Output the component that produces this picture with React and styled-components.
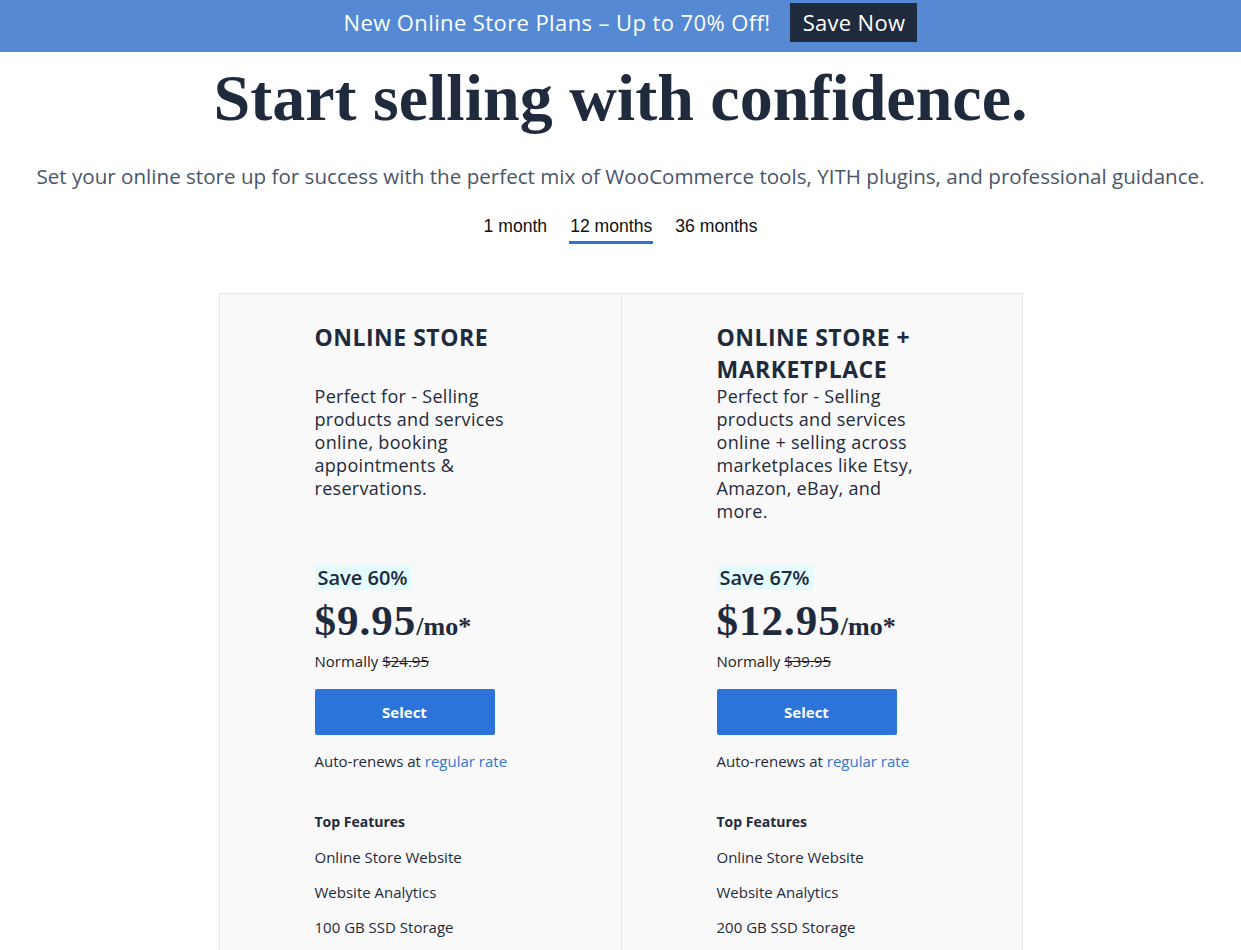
import React from 'react';
import styled, { createGlobalStyle } from 'styled-components';

const plans = [
  {
    title: 'ONLINE STORE',
    description: 'Perfect for - Selling products and services online, booking appointments & reservations.',
    save: 'Save 60%',
    price: '$9.95',
    normal: '$24.95',
    features: ['Online Store Website', 'Website Analytics', '100 GB SSD Storage'],
  },
  {
    title: 'ONLINE STORE + MARKETPLACE',
    description:
      'Perfect for - Selling products and services online + selling across marketplaces like Etsy, Amazon, eBay, and more.',
    save: 'Save 67%',
    price: '$12.95',
    normal: '$39.95',
    features: ['Online Store Website', 'Website Analytics', '200 GB SSD Storage'],
  },
];

const terms = ['1 month', '12 months', '36 months'];

function PlanCard({ plan }) {
  return (
    <Card>
      <CardInner>
        <PlanTitle>{plan.title}</PlanTitle>
        <PlanDescription>{plan.description}</PlanDescription>
        <SaveBadge>{plan.save}</SaveBadge>
        <Price>
          {plan.price}
          <PerMonth>/mo*</PerMonth>
        </Price>
        <Normally>
          Normally <s>{plan.normal}</s>
        </Normally>
        <SelectButton>Select</SelectButton>
        <Renews>
          Auto-renews at <RateLink href="#">regular rate</RateLink>
        </Renews>
        <FeaturesHeading>Top Features</FeaturesHeading>
        <FeatureList>
          {plan.features.map((f) => (
            <Feature key={f}>{f}</Feature>
          ))}
        </FeatureList>
      </CardInner>
    </Card>
  );
}

export default function App() {
  return (
    <>
      <GlobalStyle />
      <Banner>
        <BannerText>New Online Store Plans – Up to 70% Off!</BannerText>
        <SaveNow>Save Now</SaveNow>
      </Banner>
      <Main>
        <Headline>Start selling with confidence.</Headline>
        <Subtitle>
          Set your online store up for success with the perfect mix of WooCommerce tools, YITH plugins, and
          professional guidance.
        </Subtitle>
        <Tabs>
          {terms.map((t) => (
            <Tab key={t} active={t === '12 months'}>
              {t}
            </Tab>
          ))}
        </Tabs>
        <Cards>
          {plans.map((p) => (
            <PlanCard key={p.title} plan={p} />
          ))}
        </Cards>
      </Main>
    </>
  );
}

const GlobalStyle = createGlobalStyle`
  body {
    margin: 0;
    background: #fff;
    font-family: "Open Sans", Lato, sans-serif;
    color: #1f2a3c;
  }
  * { box-sizing: border-box; }
`;

const Banner = styled.div`
  height: 52px;
  background: #5589d4;
  display: flex;
  align-items: center;
  justify-content: center;
  gap: 20px;
  padding: 0 0 8px 20px;
`;

const BannerText = styled.span`
  color: #fff;
  font-size: 22px;
  letter-spacing: 0.4px;
`;

const SaveNow = styled.button`
  background: #1f2a3c;
  color: #fff;
  border: none;
  font-family: inherit;
  font-size: 22px;
  letter-spacing: 0.3px;
  height: 39px;
  width: 127px;
  padding: 0;
`;

const Main = styled.main`
  display: flex;
  flex-direction: column;
  align-items: center;
`;

const Headline = styled.h1`
  margin: 6px 0 0;
  font-family: "Liberation Serif", serif;
  font-weight: 700;
  font-size: 66px;
  line-height: 80px;
  color: #1f2a3c;
`;

const Subtitle = styled.p`
  margin: 25px 0 0;
  font-size: 20.6px;
  line-height: 26px;
  color: #4a5568;
`;

const Tabs = styled.div`
  display: flex;
  gap: 21px;
  margin-top: 27px;
`;

const Tab = styled.div`
  font-family: "Liberation Sans", Arial, sans-serif;
  font-size: 17.6px;
  color: #111;
  padding: 0 1px 4px;
  border-bottom: 3px solid ${(p) => (p.active ? '#2c74d8' : 'transparent')};
`;

const Cards = styled.div`
  margin-top: 49px;
  display: grid;
  grid-template-columns: 401px 401px;
  border: 1px solid #e5e5e5;
  border-bottom: none;
  background: #f9f9f9;
`;

const Card = styled.div`
  & + & {
    border-left: 1px solid #e5e5e5;
  }
`;

const CardInner = styled.div`
  padding: 27px 0 60px 95px;
  width: 320px;
  display: flex;
  flex-direction: column;
  align-items: flex-start;
`;

const PlanTitle = styled.h2`
  margin: 0;
  min-height: 64px;
  font-size: 23px;
  letter-spacing: 0.5px;
  line-height: 32px;
  font-weight: 700;
  color: #1f2a3c;
  width: 220px;
`;

const PlanDescription = styled.p`
  margin: 0;
  width: 205px;
  min-height: 180px;
  font-size: 18px;
  letter-spacing: 0.3px;
  line-height: 23px;
  color: #1f2a3c;
`;

const SaveBadge = styled.div`
  background: #e2fbfd;
  padding: 0 3px;
  font-size: 20px;
  font-weight: 600;
  line-height: 25px;
`;

const Price = styled.div`
  margin-top: 8px;
  font-family: "Liberation Serif", serif;
  font-weight: 700;
  font-size: 43px;
  letter-spacing: 1px;
  line-height: 46px;
`;

const PerMonth = styled.span`
  font-size: 26px;
  letter-spacing: 0;
`;

const Normally = styled.div`
  margin-top: 2px;
  font-size: 15px;
  line-height: 18px;
  color: #222;
`;

const SelectButton = styled.button`
  margin-top: 19px;
  width: 180px;
  height: 46px;
  border: none;
  border-radius: 2px;
  background: #2c74d9;
  color: #fff;
  font-family: inherit;
  font-size: 15px;
  font-weight: 700;
`;

const Renews = styled.div`
  margin-top: 16px;
  font-size: 15px;
  line-height: 20px;
  color: #1f2a3c;
`;

const RateLink = styled.a`
  color: #3575d3;
  text-decoration: none;
`;

const FeaturesHeading = styled.div`
  margin-top: 41px;
  font-size: 14px;
  font-weight: 700;
  line-height: 20px;
`;

const FeatureList = styled.ul`
  list-style: none;
  margin: 15px 0 0;
  padding: 0;
  display: flex;
  flex-direction: column;
  gap: 15px;
`;

const Feature = styled.li`
  font-size: 15px;
  line-height: 20px;
`;
